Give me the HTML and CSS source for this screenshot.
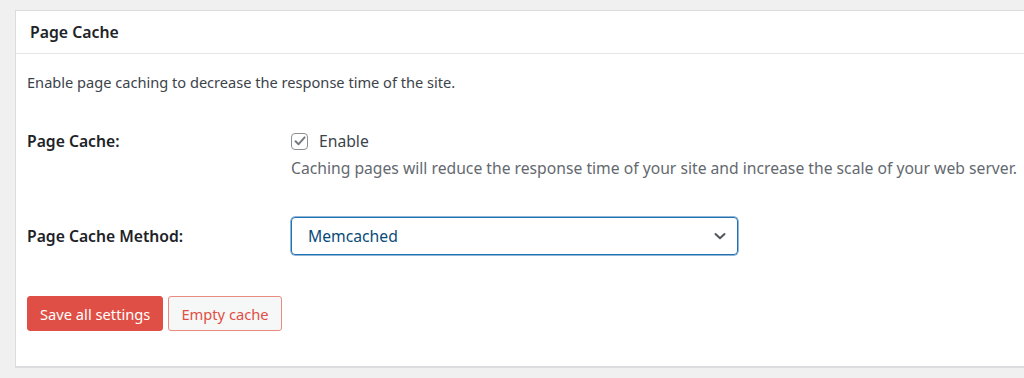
FILE: index.html
```html
<!DOCTYPE html>
<html lang="en">
<head>
  <meta charset="UTF-8" />
  <meta name="viewport" content="width=device-width, initial-scale=1.0" />
  <title>Page Cache</title>
  <link rel="stylesheet" href="styles.css">
</head>
<body>

<!-- page cache box -->
<div class="postbox">
  <h2 class="postbox-title">Page Cache</h2>
  <div class="inside">
    <p class="intro">Enable page caching to decrease the response time of the site.</p>

    <div class="form-table">
      <div class="form-row">
        <div class="form-label">Page Cache:</div>
        <div class="form-field">
          <label class="check">
            <span class="check-box">
              <svg width="14" height="14" viewBox="0 0 14 14"><path d="M2.5 7.2 L5.6 10.2 L11.6 3.4" fill="none" stroke="#787c82" stroke-width="2" stroke-linecap="round" stroke-linejoin="round"/></svg>
            </span>
            Enable
          </label>
          <p class="description">Caching pages will reduce the response time of your site and increase the scale of your web server.</p>
        </div>
      </div>

      <div class="form-row row-center">
        <div class="form-label">Page Cache Method:</div>
        <div class="form-field">
          <div class="select">
            <span>Memcached</span>
            <svg width="14" height="14" viewBox="0 0 14 14"><path d="M2.5 5 L7 9.3 L11.5 5" fill="none" stroke="#50575e" stroke-width="2" stroke-linecap="round" stroke-linejoin="round"/></svg>
          </div>
        </div>
      </div>
    </div>

    <div class="actions">
      <button class="btn btn-primary">Save all settings</button>
      <button class="btn btn-secondary">Empty cache</button>
    </div>
  </div>
</div>

</body>
</html>
```

FILE: styles.css
```css
* { box-sizing: border-box; }
body {
  font-family: 'Noto Sans', 'Open Sans', sans-serif;
  font-size: 14px;
  color: #3c434a;
  background-color: #f0f0f1;
  margin: 0;
  padding: 10px 0 0 15px;
  overflow: hidden;
}
.postbox {
  width: 1040px;
  background: #fff;
  border: 1px solid #dcdcde;
  border-bottom-width: 2px;
}
.postbox-title {
  margin: 0;
  padding: 0 14px;
  height: 43px;
  line-height: 42px;
  font-size: 15.8px;
  font-weight: 600;
  color: #1d2327;
  border-bottom: 1px solid #e2e4e7;
}
.inside {
  padding: 0 11px 35px;
}
.intro {
  margin: 18px 0 0;
  line-height: 20px;
  font-size: 14.6px;
  color: #3c434a;
}
.form-table {
  margin-top: 39px;
  display: flex;
  flex-direction: column;
  gap: 39px;
  font-size: 15.7px;
}
.form-row {
  display: grid;
  grid-template-columns: 264px 1fr;
  align-items: start;
}
.row-center {
  align-items: center;
}
.form-label {
  font-weight: 600;
  color: #1d2327;
  line-height: 20px;
}
.check {
  display: flex;
  align-items: center;
  gap: 11px;
  line-height: 20px;
  color: #3c434a;
}
.check-box {
  width: 17px;
  height: 17px;
  border: 1px solid #8c8f94;
  border-radius: 4px;
  display: flex;
  align-items: center;
  justify-content: center;
}
.description {
  margin: 7px 0 0;
  line-height: 20px;
  color: #646970;
  white-space: nowrap;
}
.select {
  width: 447px;
  height: 38px;
  border: 1px solid #2271b1;
  border-radius: 4px;
  box-shadow: 0 0 0 0.5px #2271b1;
  display: flex;
  align-items: center;
  justify-content: space-between;
  padding: 0 10px 0 16px;
  color: #0a4b78;
}
.actions {
  margin-top: 41px;
  display: flex;
  gap: 5px;
}
.btn {
  font-family: inherit;
  font-size: 14.7px;
  height: 35px;
  padding: 0 12px;
  border-radius: 3px;
  cursor: pointer;
}
.btn-primary {
  background: #e04f45;
  border: 1px solid #e04f45;
  color: #fff;
}
.btn-secondary {
  background: #f6f7f7;
  border: 1px solid #ea8a83;
  color: #e04f45;
}
```
